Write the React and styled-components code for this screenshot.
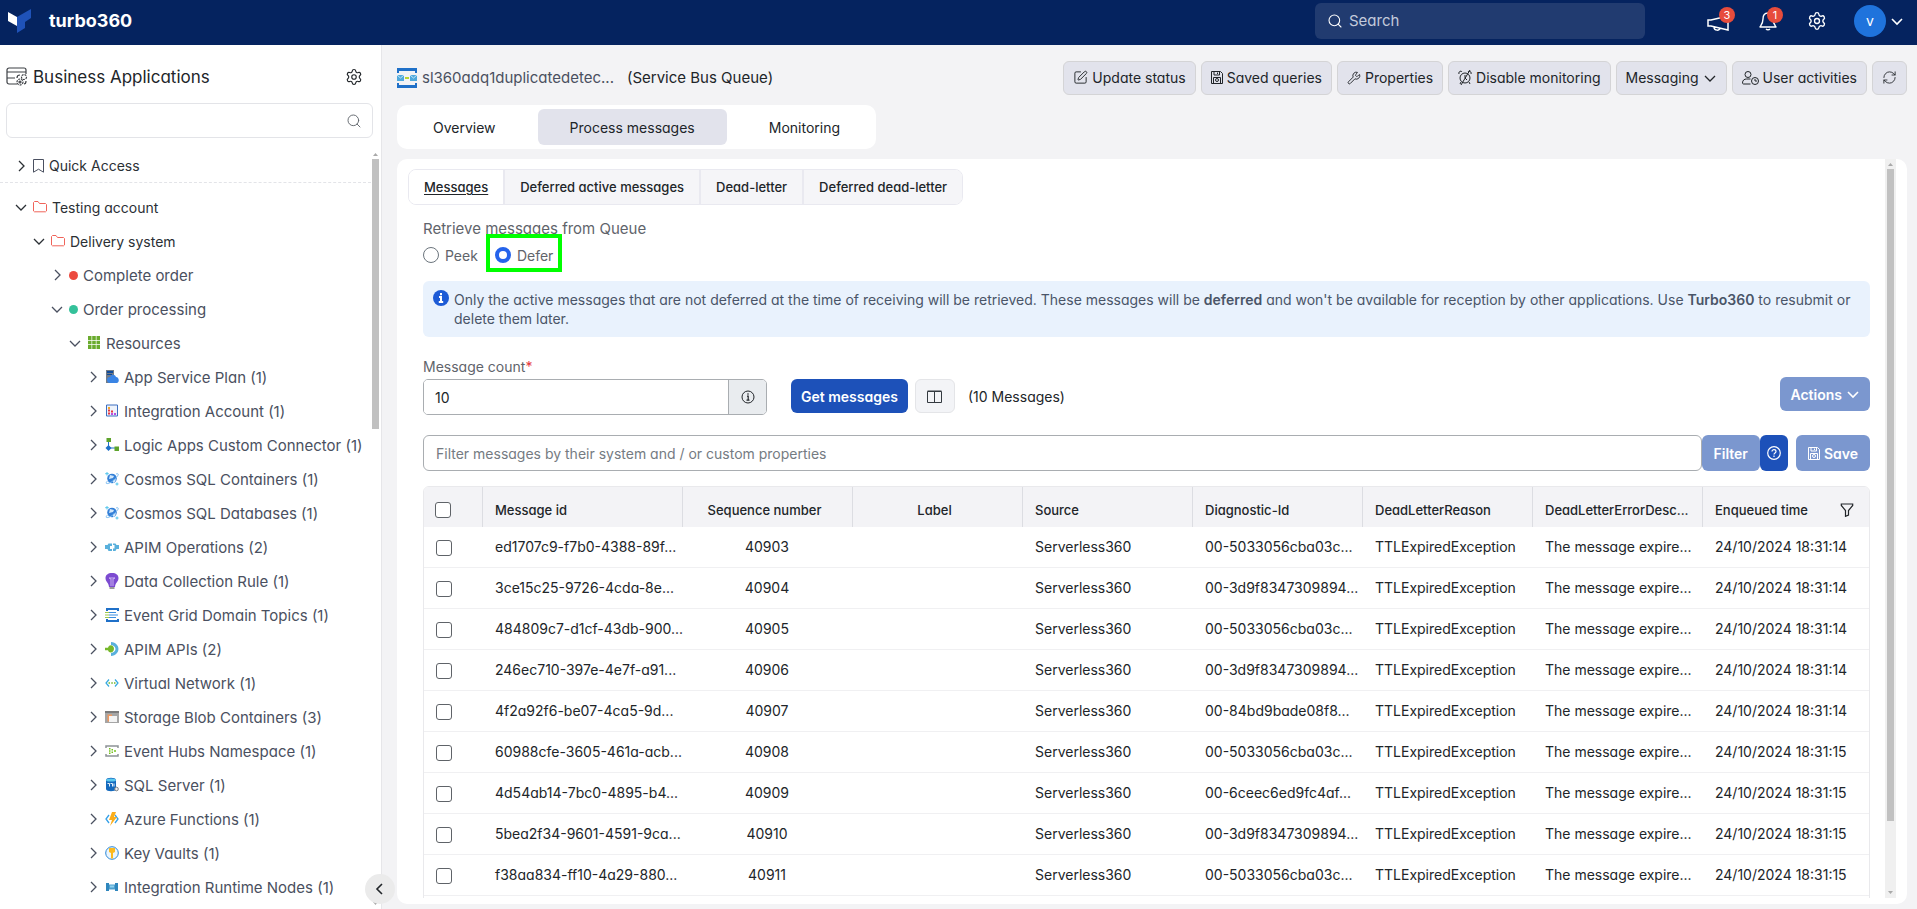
import React, { useState } from 'react';
import styled, { createGlobalStyle } from 'styled-components';
import { Settings, Search, RefreshCw, Wrench, SquarePen } from 'lucide-react';

const GlobalStyle = createGlobalStyle`
  * {
    box-sizing: border-box;
  }
  html, body, #root {
    height: 100%;
    margin: 0;
  }
  body, button, input {
    font-family: 'Inter', 'Liberation Sans', sans-serif;
    font-size: 14px;
    font-feature-settings: 'cv11';
    color: #212529;
  }
  button {
    cursor: pointer;
  }
  svg {
    display: block;
    flex: none;
  }
`

const Page = styled.div`
  display: flex;
  flex-direction: column;
  height: 100vh;
  overflow: hidden;
  background: #f3f3f5;
`

/* ---------- top bar ---------- */

const TopBar = styled.header`
  display: flex;
  align-items: center;
  flex: none;
  height: 45px;
  padding: 0 13px 4px 8px;
  background: #05235f;
  color: #fff;
`

const Brand = styled.a`
  display: flex;
  align-items: center;
  gap: 18px;
  color: #fff;
  font-size: 18px;
  font-weight: 700;
  text-decoration: none;
`

const GlobalSearch = styled.label`
  display: flex;
  align-items: center;
  gap: 4px;
  width: 330px;
  height: 36px;
  margin-left: auto;
  padding: 0 12px;
  border-radius: 6px;
  background: #213b70;
  input {
    flex: 1;
    min-width: 0;
    border: none;
    outline: none;
    background: none;
    color: #fff;
    font-size: 15px;
  }
  input::placeholder {
    color: #c3cadb;
    opacity: 1;
  }
`

const TopActions = styled.div`
  display: flex;
  align-items: center;
  gap: 30px;
  margin-left: 62px;
`

const IconButton = styled.button`
  position: relative;
  display: flex;
  padding: 0;
  border: none;
  background: none;
  color: inherit;
`

const Count = styled.span`
  position: absolute;
  top: -4px;
  right: -6px;
  width: 16px;
  height: 16px;
  border-radius: 50%;
  background: #e74c3c;
  color: #fff;
  font-size: 11px;
  line-height: 16px;
  text-align: center;
`

const Account = styled.button`
  display: flex;
  align-items: center;
  gap: 4px;
  margin-left: -3px;
  padding: 0;
  border: none;
  background: none;
  color: #fff;
`

const Avatar = styled.span`
  width: 32px;
  height: 32px;
  border-radius: 50%;
  background: #1f73dc;
  line-height: 32px;
  text-align: center;
`

/* ---------- sidebar ---------- */

const Body = styled.div`
  display: flex;
  flex: 1;
  min-height: 0;
`

const Sidebar = styled.aside`
  position: relative;
  display: flex;
  flex-direction: column;
  flex: none;
  width: 382px;
  border-right: 1px solid #e6e6e9;
  background: #fff;
`

const SidebarHead = styled.div`
  display: flex;
  align-items: center;
  gap: 5px;
  height: 47px;
  margin-top: 8px;
  padding: 0 18px 0 6px;
  h1 {
    flex: 1;
    margin: 0;
    font-size: 17px;
    font-weight: 400;
  }
`

const TreeSearch = styled.label`
  display: flex;
  align-items: center;
  height: 35px;
  margin: 3px 8px 0 6px;
  padding-right: 10px;
  border: 1px solid #e3e4e8;
  border-radius: 6px;
  color: #5f646b;
  input {
    flex: 1;
    min-width: 0;
    border: none;
    outline: none;
    background: none;
  }
`

const TreeArea = styled.div`
  display: flex;
  flex: 1;
  min-height: 0;
  margin-top: 11px;
  padding-right: 2px;
`

const Tree = styled.ul`
  flex: 1;
  margin: 0;
  padding: 0;
  overflow: hidden;
  list-style: none;
`

const Node = styled.li`
  display: flex;
  align-items: center;
  gap: 5px;
  height: 34px;
  padding-left: ${p => 14 + p.$level * 18}px;
  color: ${p => p.$level < 2 ? '#2b3035' : '#4a5060'};
  font-size: ${p => p.$level < 2 ? 14 : 15}px;
  white-space: nowrap;
`

const QuickAccess = styled(Node)`
  margin-bottom: 7px;
  border-bottom: 1px dashed #e3e4e8;
`

const Dot = styled.span`
  width: 9px;
  height: 9px;
  border-radius: 50%;
  background: ${p => p.$color};
`

const Track = styled.div`
  display: flex;
  flex-direction: column;
  align-items: center;
  gap: 3px;
  flex: none;
  width: ${p => p.$shaded ? 11 : 8}px;
  padding: 4px 0;
  background: ${p => p.$shaded ? '#f0f0f0' : 'none'};
`

const Thumb = styled.div`
  flex: ${p => p.$part};
  width: 7px;
  background: #c1c1c1;
`

const Rest = styled.div`
  flex: ${p => p.$part};
`

const Collapse = styled.button`
  position: absolute;
  right: -14px;
  bottom: 5px;
  z-index: 1;
  display: flex;
  align-items: center;
  justify-content: center;
  width: 30px;
  height: 30px;
  padding: 0;
  border: none;
  border-radius: 50%;
  background: #ebebeb;
`

/* ---------- main area ---------- */

const Main = styled.main`
  display: flex;
  flex-direction: column;
  flex: 1;
  min-width: 0;
  padding: 16px 10px 5px 15px;
`

const TitleRow = styled.div`
  display: flex;
  align-items: center;
  gap: 5px;
  height: 33px;
`

const ResourceName = styled.h2`
  margin: 0 8px 0 0;
  color: #4a5060;
  font-size: 15px;
  font-weight: 400;
  white-space: nowrap;
`

const ResourceType = styled.span`
  flex: 1;
  font-size: 15px;
  white-space: nowrap;
`

const ToolButton = styled.button`
  display: flex;
  align-items: center;
  gap: 4px;
  height: 34px;
  padding: 0 9px;
  border: 1px solid #d4d4d6;
  border-radius: 6px;
  background: #e2e3ec;
  white-space: nowrap;
`

const Tabs = styled.nav`
  display: flex;
  align-self: flex-start;
  gap: 10px;
  margin: 11px 0 10px;
  padding: 4px;
  border-radius: 10px;
  background: #fff;
`

const Tab = styled.button`
  height: 36px;
  padding: 0 32px;
  border: none;
  border-radius: 6px;
  background: ${p => p.$active ? '#e2e3ec' : 'none'};
`

const Panel = styled.section`
  display: flex;
  flex: 1;
  min-height: 0;
  padding: 0 11px 6px 11px;
  border-radius: 10px;
  background: #fff;
`

const Scroll = styled.div`
  flex: 1;
  min-width: 0;
  overflow: hidden;
`

const SubTabs = styled.nav`
  display: inline-flex;
  margin-top: 10px;
  border: 1px solid #e9e9f0;
  border-radius: 8px;
  overflow: hidden;
`

const SubTab = styled.button`
  height: 34px;
  padding: 0 15px;
  border: none;
  border-left: ${p => p.$active ? 'none' : '2px solid #e9e9f0'};
  background: ${p => p.$active ? '#fff' : '#f5f5f8'};
  font-size: 13px;
  font-weight: 500;
  text-decoration: ${p => p.$active ? 'underline' : 'none'};
  text-underline-offset: 2px;
`

const Content = styled.div`
  padding: 12px 15px 0;
`

const Retrieve = styled.fieldset`
  display: flex;
  gap: 17px;
  margin: 0;
  padding: 0;
  border: none;
  color: #5f646b;
  legend {
    padding: 0;
    font-size: 15px;
    line-height: 24px;
  }
`

const Choice = styled.label`
  position: relative;
  display: flex;
  align-items: center;
  gap: 6px;
  height: 28px;
  input {
    appearance: none;
    width: 16px;
    height: 16px;
    margin: 0;
    border: 1px solid #6c757d;
    border-radius: 50%;
  }
  input:checked {
    border: 4px solid #2563eb;
  }
`

// outline lies over the label above it
const Highlight = styled.span`
  position: absolute;
  inset: -7px -9px -3px;
  border: 4px solid #00ff00;
`

const Notice = styled.div`
  display: flex;
  gap: 5px;
  margin-top: 12px;
  padding: 9px 10px;
  border-radius: 6px;
  background: #e9f2fd;
  color: #4a5568;
  line-height: 19px;
  p {
    margin: 0;
  }
  b {
    font-weight: 600;
  }
`

const CountRow = styled.div`
  display: flex;
  align-items: flex-end;
  margin-top: 18px;
`

const CountField = styled.div`
  width: 344px;
  margin-right: 24px;
  label {
    color: #5f646b;
    line-height: 24px;
  }
  b {
    color: #e5383b;
    font-weight: 400;
  }
`

const InputGroup = styled.div`
  display: flex;
  height: 36px;
  border: 1px solid #a9adb1;
  border-radius: 5px;
  overflow: hidden;
  input {
    flex: 1;
    min-width: 0;
    padding: 0 11px;
    border: none;
    outline: none;
  }
`

const Addon = styled.button`
  display: flex;
  align-items: center;
  justify-content: center;
  width: 38px;
  padding: 0;
  border: none;
  border-left: 1px solid #a9adb1;
  background: #e9ecef;
`

const CountActions = styled.div`
  display: flex;
  align-items: center;
  flex: 1;
  padding-bottom: 2px;
`

const BlueButton = styled.button`
  display: flex;
  align-items: center;
  justify-content: center;
  gap: 4px;
  height: ${p => p.$tall ? 36 : 34}px;
  padding: 0 ${p => p.$narrow ? 7 : p.$tall ? 12 : 10}px;
  border: none;
  border-radius: 6px;
  background: ${p => p.disabled ? '#7b97cf' : '#1d51b9'};
  color: #fff;
  font-weight: 600;
  white-space: nowrap;
`

const ColumnsButton = styled.button`
  display: flex;
  align-items: center;
  justify-content: center;
  width: 40px;
  height: 34px;
  margin: 0 13px 0 7px;
  border: 1px solid #e4e5e8;
  border-radius: 6px;
  background: #f3f4f7;
`

const ActionsSlot = styled.div`
  align-self: flex-end;
  padding-bottom: 4px;
`

const FilterRow = styled.div`
  display: flex;
  margin-top: 20px;
  input {
    flex: 1;
    min-width: 0;
    height: 36px;
    padding: 0 12px;
    border: 1px solid #a9adb1;
    border-radius: 6px;
    outline: none;
  }
  input::placeholder {
    color: #757b82;
    opacity: 1;
  }
  ${BlueButton}:last-child {
    margin-left: 8px;
  }
`

const Table = styled.table`
  width: 100%;
  margin-top: 15px;
  border: 1px solid #e9e9ec;
  border-radius: 6px;
  border-spacing: 0;
  table-layout: fixed;
  overflow: hidden;
`

const Col = styled.col`
  width: ${p => p.$width}px;
`

const Th = styled.th`
  height: 40px;
  padding: 6px 8px 0 ${p => p.$center ? 2 : 12}px;
  border-left: 1px solid #dcdde2;
  background: #f3f3f6;
  font-size: 13px;
  font-weight: 500;
  text-align: ${p => p.$center ? 'center' : 'left'};
  overflow: hidden;
  text-overflow: ellipsis;
  white-space: nowrap;
  &:first-child {
    border-left: none;
  }
  div {
    display: flex;
    align-items: center;
    justify-content: space-between;
    padding-right: 7px;
  }
`

const Td = styled.td`
  height: 41px;
  padding: 0 0 2px ${p => p.$center ? 0 : 13}px;
  border-bottom: 1px solid #f0f0f2;
  text-align: ${p => p.$center ? 'center' : 'left'};
  white-space: nowrap;
`

const Check = styled.input`
  display: block;
  appearance: none;
  width: 16px;
  height: 16px;
  margin: 0 0 0 -1px;
  border: 1px solid #5f6368;
  border-radius: 3px;
  background: #fff;
  &:checked {
    background: #2563eb;
  }
  ${Td} & {
    margin-top: 3px;
  }
`

/* ---------- icons ---------- */

const chevrons = {
  down: 'M2 5l5 5 5-5',
  right: 'M5 2l5 5-5 5',
  left: 'M9 2L4 7l5 5',
}

function Chevron({ to, width = 1.3 }) {
  return (
    <svg width="14" height="14" viewBox="0 0 14 14" fill="none" stroke="currentColor" strokeWidth={width}>
      <path d={chevrons[to]}/>
    </svg>
  )
}

function Logo() {
  return (
    <svg width="23" height="24" viewBox="0 0 23 24">
      <path d="M0 3l9 5v9L0 12z" fill="#fff"/>
      <path d="M9 8L23 0v9l-6 4v6l-8 5z" fill="#1f52b8"/>
    </svg>
  )
}

function Horn() {
  return (
    <svg width="22" height="20" viewBox="0 0 22 20" fill="none" stroke="currentColor" strokeWidth="1.5">
      <path d="M1 9v6h3l17 4V5L4 9zM7 16c0 4 6 4 6 1"/>
    </svg>
  )
}

function BellIcon() {
  return (
    <svg width="18" height="20" viewBox="0 0 18 20" fill="none" stroke="currentColor" strokeWidth="1.4" strokeLinejoin="round">
      <path d="M9 2C5 2 4 5 4 8c0 4-1 5-3 8h16c-2-3-3-4-3-8 0-3-1-6-5-6zM7 18c1 1 3 1 4 0"/>
    </svg>
  )
}

function AppsIcon() {
  return (
    <svg width="22" height="20" viewBox="0 0 22 20" fill="none" stroke="#3d4045" strokeWidth="1.2">
      <path d="M11 17H3a2 2 0 0 1-2-2V3a2 2 0 0 1 2-2h15a2 2 0 0 1 2 2v4M1 5h19M1 11h8"/>
      <circle cx="18" cy="10" r="2.5" strokeDasharray="2 1"/>
      <circle cx="14" cy="15" r="3" strokeDasharray="2 1"/>
      <circle cx="14" cy="15" r="1"/>
      <path d="M20 14c0 2-1 3-2 3M11 11c0-2 1-3 3-3"/>
    </svg>
  )
}

function Floppy() {
  return (
    <svg width="12" height="13" viewBox="0 0 12 13" fill="none" stroke="currentColor">
      <path d="M.5.5h9l2 2v10H.5zM3 .5V4h5.5V.5M6.5 1.5v1.5"/>
      <path d="M2.5 12.5v-6h7v6"/>
      <circle cx="6" cy="9" r="1.5"/>
    </svg>
  )
}

function AlarmOff() {
  return (
    <svg width="14" height="17" viewBox="0 0 14 17" fill="none" stroke="currentColor">
      <circle cx="7" cy="9" r="5"/>
      <path d="M7 6v3l2 2M1 5c-1-2 2-4 3-2M13 5c1-2-2-4-3-2M3 13l-1 2M11 13l1 2M12 1L3 16"/>
    </svg>
  )
}

function UserClock() {
  return (
    <svg width="17" height="14" viewBox="0 0 17 14" fill="none" stroke="currentColor">
      <circle cx="6" cy="3.5" r="3"/>
      <path d="M8.5 13H1.5c-1 0-1-1-1-1 0-3 2-4 4-4h4"/>
      <circle cx="13" cy="10" r="3.5"/>
      <path d="M13 8v2h2"/>
    </svg>
  )
}

function InfoIcon() {
  return (
    <svg width="14" height="14" viewBox="0 0 14 14" fill="none" stroke="currentColor">
      <circle cx="7" cy="7" r="6"/>
      <path d="M6 6.2h1.2V10M5.5 10.2h3M7 3.2v1.5" strokeWidth="1.2"/>
    </svg>
  )
}

function InfoSolid() {
  return (
    <svg width="16" height="16" viewBox="0 0 16 16">
      <circle cx="8" cy="8" r="8" fill="#1d5bd6"/>
      <path d="M8 3v2.2M6 7h2v5M5.8 12h4.4" fill="none" stroke="#fff" strokeWidth="2"/>
    </svg>
  )
}

function HelpIcon() {
  return (
    <svg width="14" height="14" viewBox="0 0 14 14" fill="none" stroke="currentColor" strokeWidth="1.2">
      <circle cx="7" cy="7" r="6.3"/>
      <path d="M5 5.5c0-2.5 4-2.5 4 0C9 7 7 7 7 8.5M7 9.5V11"/>
    </svg>
  )
}

function ColumnsIcon() {
  return (
    <svg width="15" height="13" viewBox="0 0 15 13" fill="none" stroke="#343a40">
      <path d="M.5 1.5h14v11H.5zM7.5 1v11M.5 1h14"/>
    </svg>
  )
}

function Funnel() {
  return (
    <svg width="14" height="14" viewBox="0 0 13 14" fill="none" stroke="currentColor" strokeWidth="1.2">
      <path d="M.8 1h11.4v1.5L8 7.5V12l-3 1.3V7.5L.8 2.5z"/>
    </svg>
  )
}

function Bookmark() {
  return (
    <svg width="11" height="14" viewBox="0 0 11 14" fill="none" stroke="#4a5060">
      <path d="M.5.5h10v12.7l-5-3-5 3z"/>
    </svg>
  )
}

function Folder() {
  return (
    <svg width="14" height="12" viewBox="0 0 14 12" fill="none" stroke="#f0645a">
      <path d="M.5 10V1.5l1-1h3.5l1.5 2h6l1 1V10l-1 .8h-11z"/>
    </svg>
  )
}

function QueueIcon() {
  return (
    <svg width="20" height="20" viewBox="0 0 20 20">
      <path d="M0 0h20v5h-2V3H2v2H0zM0 20h20v-5h-2v2H2v-2H0z" fill="#1f70c8"/>
      <path d="M0 7h7v6H0zM13 7h7v6h-7z" fill="#4fa9dc"/>
      <path d="M0 7l3.5 3L7 7M13 7l3.5 3L20 7" fill="none" stroke="#c8e6f7"/>
      <path d="M8 10h4" stroke="#b9d432" strokeWidth="2"/>
    </svg>
  )
}

const drawings = {
  grid: <path d="M1 0h3.5v4H1zM5.2 0h3.6v4H5.2zM9.5 0H13v4H9.5zM1 4.7h3.5v3.6H1zM5.2 4.7h3.6v3.6H5.2zM9.5 4.7H13v3.6H9.5zM1 9h3.5v4H1zM5.2 9h3.6v4H5.2zM9.5 9H13v4H9.5z" fill="#6aab2e"/>,
  plan: <>
    <path d="M1 0h8v13H1z" fill="#737b85"/>
    <path d="M2 1h6v2H2zM2 4h5v1H2z" fill="#0f4c9c"/>
    <path d="M5 13a3 3 0 0 1 0-6c1-3 5-3 6 0 3 0 4 5 1 6z" fill="#3a84e4"/>
  </>,
  account: <>
    <path d="M1.5 1h11v11h-11z" fill="#eef3fb" stroke="#3c6fc0"/>
    <path d="M3 3h2v2H3z" fill="#f5a623"/>
    <path d="M3 5.5h2v2H3zM3 8.5h2v2H3zM6 6.5h2v2H6z" fill="#e5393d"/>
    <path d="M6 9h2v2H6zM9 9h2v2H9z" fill="#b84ee0"/>
  </>,
  logic: <>
    <path d="M3.5 4v6H10" fill="none" stroke="#1f70c8"/>
    <path d="M1.5 0H6v4H1.5zM9.5 8.5H14V13H9.5z" fill="#5ea42c"/>
    <path d="M3.5 7l3 3-3 3-3-3z" fill="#1f70c8"/>
  </>,
  cosmos: <>
    <circle cx="7" cy="6.5" r="4.8" fill="#3480d8"/>
    <path d="M5 3l4 1-1 2-4 1zM8 8l3-1-1 3-2 1z" fill="#cfe6fa"/>
    <path d="M2.5 9c-4 4 2 3 6-.5s7-8 2.500-6.500" fill="none" stroke="#7fbdf0"/>
    <path d="M2 0v3.5M.2 1.7h3.6M12 10.5v3M10.5 12h3" stroke="#50c4ec"/>
  </>,
  operations: <>
    <path d="M0 5h2.5l1-1.5H7V6H5v3h2v2H3.500L2.500 9H0z" fill="#59b0dc"/>
    <path d="M14 5h-2.500l-1-1.500H8V5h1.500v3.500H8V11h2.500l1-2H14z" fill="#59b0dc"/>
  </>,
  bulb: <>
    <path d="M7-1c4 0 6.5 2 6.5 5 0 4-3 4-3.5 9H4C3.500 8 .5 8 .5 4c0-3 2.500-5 6.500-5z" fill="#7c4bd1"/>
    <path d="M4 4l2 1v7M10 4L8 5v7M4 4h6" fill="none" stroke="#c9b2f0"/>
    <path d="M4.500 13h5v2h-5z" fill="#9a9a9a"/>
  </>,
  topics: <>
    <path d="M2 3V1h11v2M2 11v2h11v-2" fill="none" stroke="#1f70c8" strokeWidth="2"/>
    <path d="M4 4.500h7M4 7h9M4 9.500h7" stroke="#3c8ee0"/>
    <path d="M0 4.500h4M0 7h4M0 9.500h4" stroke="#9fc94b"/>
  </>,
  apis: <>
    <path d="M6 0c10 1 10 13 0 14v-3c6-1 6-7 0-8z" fill="#59b0dc"/>
    <path d="M0 5.8h3c1-4 6-3 6 1s-5 5-6 1.400H0z" fill="#76b82a"/>
  </>,
  network: <>
    <path d="M4 3.500L1 7l3 3.500M10 3.500L13 7l-3 3.500" fill="none" stroke="#35a8e0" strokeWidth="1.2"/>
    <path d="M3.500 7h1.500M6.300 7h1.500M9 7h1.500" stroke="#76b82a" strokeWidth="1.5"/>
  </>,
  blob: <>
    <path d="M0 1h14v12H0z" fill="#a5a5a5"/>
    <path d="M0 1h14v2H0z" fill="#7a7a7a"/>
    <path d="M2.500 4.500H7v7H2.500z" fill="#f0995f"/>
    <path d="M4 6h8v6H4z" fill="#f3f3f3"/>
  </>,
  hubs: <>
    <path d="M1 4V2h12v2M1 10v2h12v-2" fill="none" stroke="#8d9296" strokeWidth="1.5"/>
    <path d="M4 4h1.500v1.500H4zM4 6.300h1.500v1.500H4zM4 8.500h1.500V10H4zM6.500 5H8v1.500H6.500zM6.500 7.500H8V9H6.500zM9 6.200h2v1.600H9z" fill="#76c21e"/>
  </>,
  sql: <>
    <path d="M1 2c0-3 10-3 10 0v9c0 3-10 3-10 0z" fill="#1469bd"/>
    <ellipse cx="6" cy="2" rx="5" ry="1.5" fill="#5cc8ef"/>
    <path d="M2.500 5.500h2v3M5.500 5.500h2v3M9 5.500v3" fill="none" stroke="#e4f1fb"/>
    <circle cx="11.5" cy="11" r="1.8" fill="#eee" stroke="#7b7f84"/>
  </>,
  functions: <>
    <path d="M4 3L1 7l3 4M10 3l3 4-3 4" fill="none" stroke="#35a0e8" strokeWidth="1.3"/>
    <path d="M7 0h4L9 5h3l-7 9 2-6H4z" fill="#fbad19"/>
  </>,
  key: <>
    <circle cx="7" cy="7" r="6.3" fill="#eaf5fd" stroke="#2b88d8"/>
    <path d="M4 2h6v4L8 7v5l-1 1-1-1V7L4 6z" fill="#fbb91f"/>
  </>,
  nodes: <>
    <path d="M1 3h3v8H1zM10 3h3v8h-3z" fill="#2f86bd"/>
    <path d="M4 4.500h6v5H4z" fill="#4d9fce"/>
    <path d="M5 5.500h4v2H5z" fill="#8fd0ee"/>
  </>,
}

function Glyph({ name }) {
  return <svg width="14" height="14" viewBox="0 0 14 14" overflow="visible">{drawings[name]}</svg>
}

/* ---------- data ---------- */

const resources = [
  ['plan', 'App Service Plan (1)'],
  ['account', 'Integration Account (1)'],
  ['logic', 'Logic Apps Custom Connector (1)'],
  ['cosmos', 'Cosmos SQL Containers (1)'],
  ['cosmos', 'Cosmos SQL Databases (1)'],
  ['operations', 'APIM Operations (2)'],
  ['bulb', 'Data Collection Rule (1)'],
  ['topics', 'Event Grid Domain Topics (1)'],
  ['apis', 'APIM APIs (2)'],
  ['network', 'Virtual Network (1)'],
  ['blob', 'Storage Blob Containers (3)'],
  ['hubs', 'Event Hubs Namespace (1)'],
  ['sql', 'SQL Server (1)'],
  ['functions', 'Azure Functions (1)'],
  ['key', 'Key Vaults (1)'],
  ['nodes', 'Integration Runtime Nodes (1)'],
]

const messages = [
  ['ed1707c9-f7b0-4388-89f...', '40903', '00-5033056cba03c...', '24/10/2024 18:31:14'],
  ['3ce15c25-9726-4cda-8e...', '40904', '00-3d9f8347309894...', '24/10/2024 18:31:14'],
  ['484809c7-d1cf-43db-900...', '40905', '00-5033056cba03c...', '24/10/2024 18:31:14'],
  ['246ec710-397e-4e7f-a91...', '40906', '00-3d9f8347309894...', '24/10/2024 18:31:14'],
  ['4f2a92f6-be07-4ca5-9d...', '40907', '00-84bd9bade08f8...', '24/10/2024 18:31:14'],
  ['60988cfe-3605-461a-acb...', '40908', '00-5033056cba03c...', '24/10/2024 18:31:15'],
  ['4d54ab14-7bc0-4895-b4...', '40909', '00-6ceec6ed9fc4af...', '24/10/2024 18:31:15'],
  ['5bea2f34-9601-4591-9ca...', '40910', '00-3d9f8347309894...', '24/10/2024 18:31:15'],
  ['f38aa834-ff10-4a29-880...', '40911', '00-5033056cba03c...', '24/10/2024 18:31:15'],
]

const columnWidths = [58, 200, 170, 170, 170, 170, 170, 170];
const tabs = ['Overview', 'Process messages', 'Monitoring'];
const subTabs = ['Messages', 'Deferred active messages', 'Dead-letter', 'Deferred dead-letter'];

/* ---------- components ---------- */

function Arrow({ up }) {
  return (
    <svg width="5" height="3" viewBox="0 0 5 3">
      <path d={up ? 'M0 3L2.5 0 5 3z' : 'M0 0h5L2.5 3z'} fill="#a9a9a9"/>
    </svg>
  )
}

function ScrollTrack({ thumb, rest, shaded }) {
  return (
    <Track $shaded={shaded} aria-hidden="true">
      <Arrow up/>
      <Thumb $part={thumb}/>
      <Rest $part={rest}/>
      <Arrow/>
    </Track>
  )
}

function SideMenu() {
  return (
    <Sidebar>
      <SidebarHead>
        <AppsIcon/>
        <h1>Business Applications</h1>
        <IconButton aria-label="Settings"><Settings size={18} strokeWidth={1.5}/></IconButton>
      </SidebarHead>
      <TreeSearch>
        <input type="text" aria-label="Search applications"/>
        <Search size={16} strokeWidth={1.4}/>
      </TreeSearch>
      <TreeArea>
        <Tree>
          <QuickAccess $level={0}><Chevron to="right"/><Bookmark/>Quick Access</QuickAccess>
          <Node $level={0}><Chevron to="down"/><Folder/>Testing account</Node>
          <Node $level={1}><Chevron to="down"/><Folder/>Delivery system</Node>
          <Node $level={2}><Chevron to="right"/><Dot $color="#ec4a3f"/>Complete order</Node>
          <Node $level={2}><Chevron to="down"/><Dot $color="#34c19a"/>Order processing</Node>
          <Node $level={3}><Chevron to="down"/><Glyph name="grid"/>Resources</Node>
          {resources.map(([icon, text]) =>
            <Node key={text} $level={4}><Chevron to="right"/><Glyph name={icon}/>{text}</Node>
          )}
        </Tree>
        <ScrollTrack thumb={37} rest={64}/>
      </TreeArea>
      <Collapse aria-label="Collapse"><Chevron to="left" width={1.6}/></Collapse>
    </Sidebar>
  )
}

function MessagesTable() {
  return (
    <Table>
      <colgroup>
        {columnWidths.map((width, i) => <Col key={i} $width={width}/>)}
        <col/>
      </colgroup>
      <thead>
        <tr>
          <Th><Check type="checkbox" aria-label="Select all"/></Th>
          <Th>Message id</Th>
          <Th $center>Sequence number</Th>
          <Th $center>Label</Th>
          <Th>Source</Th>
          <Th>Diagnostic-Id</Th>
          <Th>DeadLetterReason</Th>
          <Th>DeadLetterErrorDesc...</Th>
          <Th><div>Enqueued time <IconButton aria-label="Filter columns"><Funnel/></IconButton></div></Th>
        </tr>
      </thead>
      <tbody>
        {messages.map(([id, sequence, diagnostic, time]) =>
          <tr key={id}>
            <Td><Check type="checkbox" aria-label={id}/></Td>
            <Td>{id}</Td>
            <Td $center>{sequence}</Td>
            <Td/>
            <Td>Serverless360</Td>
            <Td>{diagnostic}</Td>
            <Td>TTLExpiredException</Td>
            <Td>The message expire...</Td>
            <Td>{time}</Td>
          </tr>
        )}
        <tr><Td colSpan={9}/></tr>
      </tbody>
    </Table>
  )
}

function App() {
  const [tab, setTab] = useState('Process messages');
  const [subTab, setSubTab] = useState('Messages');
  const [mode, setMode] = useState('defer');
  const [count, setCount] = useState('10');

  return (
    <Page>
      <GlobalStyle/>
      <TopBar>
        <Brand href="#"><Logo/>turbo360</Brand>
        <GlobalSearch>
          <Search size={16} strokeWidth={1.6}/>
          <input type="text" placeholder="Search" aria-label="Search"/>
        </GlobalSearch>
        <TopActions>
          <IconButton aria-label="Announcements"><Horn/><Count>3</Count></IconButton>
          <IconButton aria-label="Notifications"><BellIcon/><Count>1</Count></IconButton>
          <IconButton aria-label="Settings"><Settings size={20} strokeWidth={1.6}/></IconButton>
          <Account aria-label="Account"><Avatar>v</Avatar><Chevron to="down" width={1.6}/></Account>
        </TopActions>
      </TopBar>
      <Body>
        <SideMenu/>
        <Main>
          <TitleRow>
            <QueueIcon/>
            <ResourceName>sl360adq1duplicatedetec...</ResourceName>
            <ResourceType>(Service Bus Queue)</ResourceType>
            <ToolButton><SquarePen size={15} strokeWidth={1.5}/>Update status</ToolButton>
            <ToolButton><Floppy/>Saved queries</ToolButton>
            <ToolButton><Wrench size={14} strokeWidth={1.6}/>Properties</ToolButton>
            <ToolButton><AlarmOff/>Disable monitoring</ToolButton>
            <ToolButton>Messaging <Chevron to="down"/></ToolButton>
            <ToolButton><UserClock/>User activities</ToolButton>
            <ToolButton aria-label="Refresh"><RefreshCw size={15} strokeWidth={1.4}/></ToolButton>
          </TitleRow>
          <Tabs>
            {tabs.map(name =>
              <Tab key={name} $active={name == tab} onClick={() => setTab(name)}>{name}</Tab>
            )}
          </Tabs>
          <Panel>
            <Scroll>
              <SubTabs>
                {subTabs.map(name =>
                  <SubTab key={name} $active={name == subTab} onClick={() => setSubTab(name)}>{name}</SubTab>
                )}
              </SubTabs>
              <Content>
                <Retrieve>
                  <legend>Retrieve messages from Queue</legend>
                  <Choice>
                    <input type="radio" name="mode" checked={mode == 'peek'} onChange={() => setMode('peek')}/>
                    Peek
                  </Choice>
                  <Choice>
                    <input type="radio" name="mode" checked={mode == 'defer'} onChange={() => setMode('defer')}/>
                    Defer
                    <Highlight/>
                  </Choice>
                </Retrieve>
                <Notice>
                  <InfoSolid/>
                  <p>
                    Only the active messages that are not deferred at the time of receiving will be retrieved. These messages will be <b>deferred</b> and won't be available for reception by other applications. Use <b>Turbo360</b> to resubmit or delete them later.
                  </p>
                </Notice>
                <CountRow>
                  <CountField>
                    <label htmlFor="count">Message count<b>*</b></label>
                    <InputGroup>
                      <input id="count" type="text" value={count} onChange={e => setCount(e.target.value)}/>
                      <Addon aria-label="About the message count"><InfoIcon/></Addon>
                    </InputGroup>
                  </CountField>
                  <CountActions>
                    <BlueButton>Get messages</BlueButton>
                    <ColumnsButton aria-label="Columns"><ColumnsIcon/></ColumnsButton>
                    (10 Messages)
                  </CountActions>
                  <ActionsSlot>
                    <BlueButton disabled>Actions <Chevron to="down" width={1.6}/></BlueButton>
                  </ActionsSlot>
                </CountRow>
                <FilterRow>
                  <input type="text" aria-label="Filter" placeholder="Filter messages by their system and / or custom properties"/>
                  <BlueButton $tall disabled>Filter</BlueButton>
                  <BlueButton $tall $narrow aria-label="Help"><HelpIcon/></BlueButton>
                  <BlueButton $tall disabled><Floppy/>Save</BlueButton>
                </FilterRow>
                <MessagesTable/>
              </Content>
            </Scroll>
            <ScrollTrack shaded thumb={91} rest={9}/>
          </Panel>
        </Main>
      </Body>
    </Page>
  )
}

export default App;
